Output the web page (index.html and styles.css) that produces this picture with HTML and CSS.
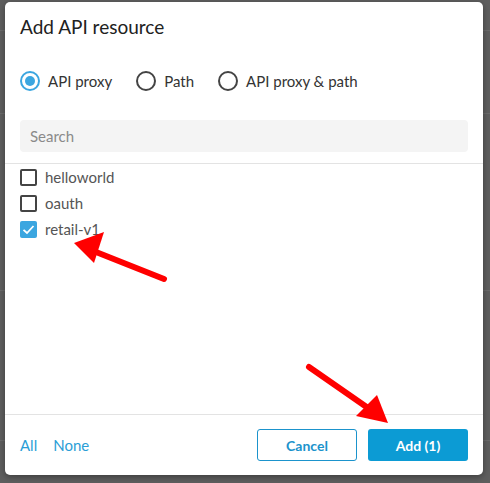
FILE: index.html
```html
<!DOCTYPE html>
<html>
<head>
<meta charset="utf-8">
<link rel="stylesheet" href="styles.css">
</head>
<body>
<div class="backdrop">
  <div class="bg-line l1"></div>
  <div class="bg-line l2"></div>
  <div class="bg-line l3"></div>
  <div class="bg-line l4"></div>
  <div class="dialog">
    <h1 class="title">Add API resource</h1>
    <div class="radios">
      <label class="radio checked"><span class="circle"></span>API proxy</label>
      <label class="radio"><span class="circle"></span>Path</label>
      <label class="radio"><span class="circle"></span>API proxy &amp; path</label>
    </div>
    <div class="search">Search</div>
    <div class="list">
      <div class="item"><span class="box"></span>helloworld</div>
      <div class="item"><span class="box"></span>oauth</div>
      <div class="item"><span class="box on"><svg viewBox="0 0 17 17" width="17" height="17"><path d="M3.5 8.8 L7 12 L13.5 5" fill="none" stroke="#fff" stroke-width="1.8"/></svg></span>retail-v1</div>
    </div>
    <div class="footer">
      <div class="links"><span class="link">All</span><span class="link">None</span></div>
      <div class="buttons">
        <button class="btn cancel">Cancel</button>
        <button class="btn add">Add (1)</button>
      </div>
    </div>
  </div>
  <svg class="arrows" width="490" height="483" viewBox="0 0 490 483">
    <line x1="164" y1="279" x2="96" y2="252" stroke="#f00" stroke-width="6" stroke-linecap="round"/>
    <polygon points="74,243 104,232 94,263" fill="#f00"/>
    <line x1="309" y1="367" x2="368" y2="408" stroke="#f00" stroke-width="6" stroke-linecap="round"/>
    <polygon points="388,423 356,416 377,395" fill="#f00"/>
  </svg>
</div>
</body>
</html>
```

FILE: styles.css
```css
html, body {
  margin: 0;
  padding: 0;
}
body {
  width: 490px;
  height: 483px;
  overflow: hidden;
  background: #5e5e5e;
  font-family: Lato, "Open Sans", sans-serif;
}
.backdrop {
  position: relative;
  width: 490px;
  height: 483px;
  padding-top: 2px;
  box-sizing: border-box;
}
.bg-line {
  position: absolute;
  left: 0;
  right: 0;
  height: 1px;
  background: #6b6b6b;
}
.l1 { top: 30px; }
.l2 { top: 113px; }
.l3 { top: 290px; }
.l4 { top: 440px; }
.dialog {
  position: relative;
  margin-left: 5px;
  width: 478px;
  height: 473px;
  background: #fff;
  border-radius: 5px;
  box-shadow: 0 2px 6px rgba(0,0,0,0.35);
  display: flex;
  flex-direction: column;
}
.title {
  margin: 13px 0 0 15px;
  font-size: 19px;
  font-weight: 400;
  line-height: 24px;
  color: #212121;
}
.radios {
  display: flex;
  align-items: center;
  margin: 30px 0 0 15px;
  height: 24px;
  font-size: 15px;
  color: #333;
}
.radio {
  display: flex;
  align-items: center;
  margin-right: 24px;
}
.circle {
  width: 16px;
  height: 16px;
  border: 2px solid #444;
  border-radius: 50%;
  margin-right: 8px;
  position: relative;
}
.radio.checked .circle {
  border-color: #3ba6e0;
}
.radio.checked .circle::after {
  content: "";
  position: absolute;
  left: 3px;
  top: 3px;
  width: 10px;
  height: 10px;
  border-radius: 50%;
  background: #3ba6e0;
}
.search {
  margin: 27px 15px 0 15px;
  height: 32px;
  border-radius: 4px;
  background: #f4f4f4;
  font-size: 15px;
  line-height: 32px;
  padding-left: 10px;
  color: #8a8a8a;
}
.list {
  margin-top: 11px;
  border-top: 1px solid #e3e3e3;
  padding: 0 0 0 15px;
  flex: 1;
}
.item {
  display: flex;
  align-items: center;
  height: 26px;
  font-size: 15px;
  color: #555;
}
.box {
  width: 13px;
  height: 13px;
  border: 2px solid #444;
  border-radius: 2px;
  margin-right: 8px;
  display: flex;
}
.box.on {
  width: 17px;
  height: 17px;
  border: none;
  background: #3ba6e0;
}
.footer {
  border-top: 1px solid #e3e3e3;
  height: 61px;
  display: flex;
  align-items: center;
  justify-content: space-between;
  padding: 0 15px;
  box-sizing: border-box;
}
.links {
  display: flex;
  gap: 16px;
  font-size: 15px;
  color: #2a9ed6;
}
.buttons {
  display: flex;
  gap: 11px;
}
.btn {
  width: 100px;
  height: 32px;
  border-radius: 3px;
  font-family: Lato, "Open Sans", sans-serif;
  font-size: 14px;
  font-weight: 700;
  cursor: pointer;
}
.cancel {
  background: #fff;
  border: 1px solid #1b93cc;
  color: #1b93cc;
}
.add {
  background: #0c9bd4;
  border: none;
  color: #fff;
}
.arrows {
  position: absolute;
  left: 0;
  top: 0;
  pointer-events: none;
}
```
